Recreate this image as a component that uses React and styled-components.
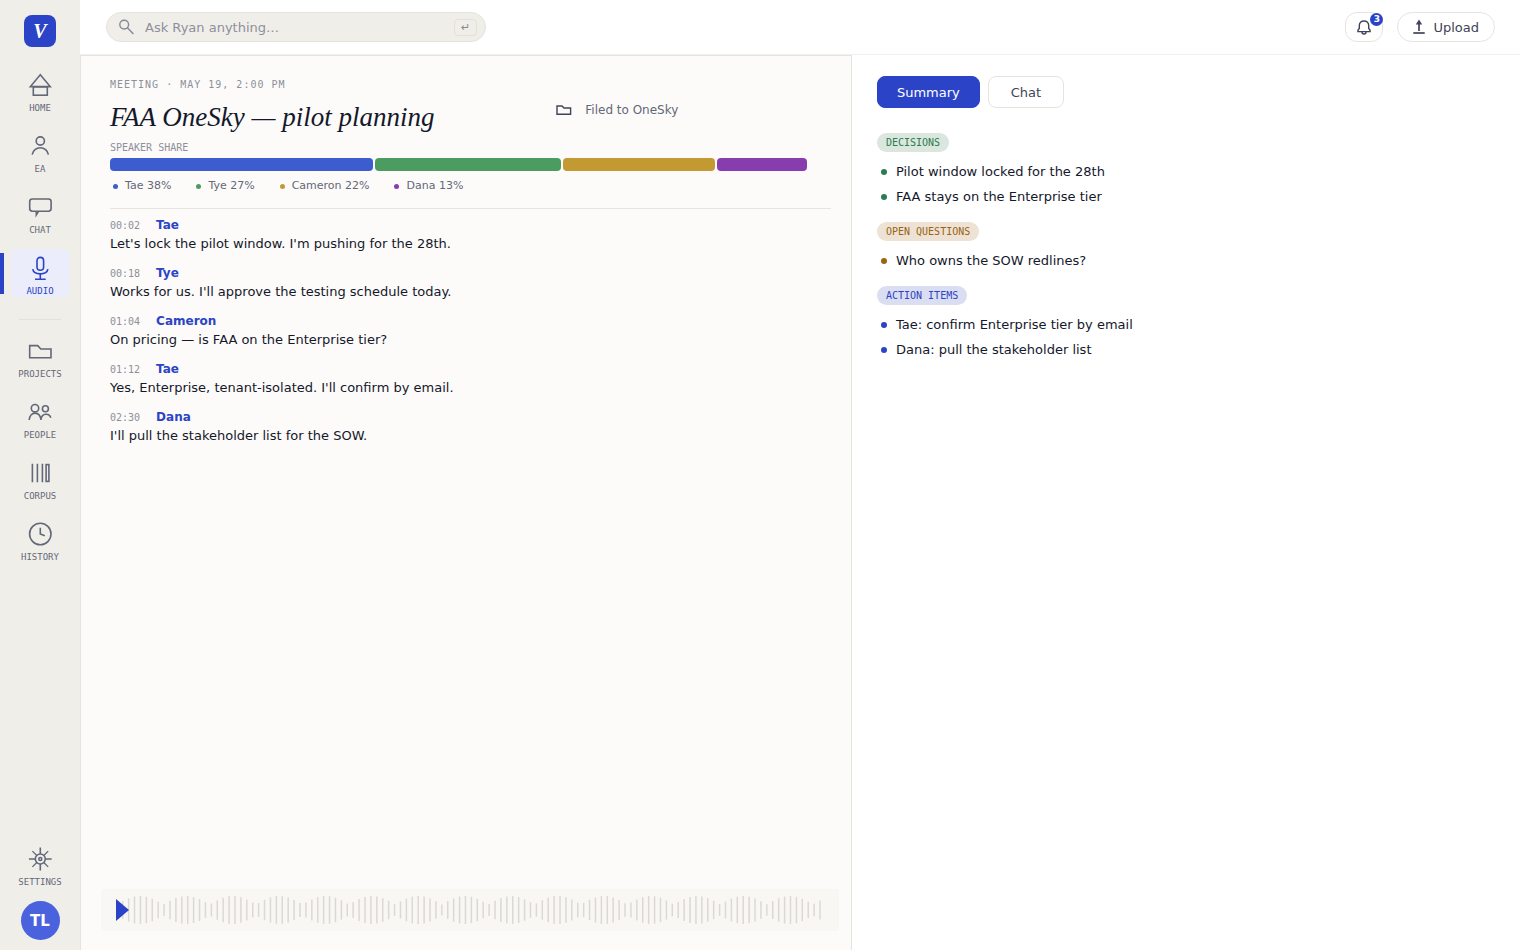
// App.jsx
import React, { useState } from 'react';
import styled, { createGlobalStyle } from 'styled-components';

const sans = "'DejaVu Sans', Verdana, sans-serif";
const mono = "'DejaVu Sans Mono', monospace";
const serif = "'Liberation Serif', 'Times New Roman', serif";

const GlobalStyle = createGlobalStyle`
  * {
    box-sizing: border-box;
  }

  body {
    margin: 0;
    background-color: #fff;
    color: #14182b;
    font-family: ${sans};
  }

  button, input {
    font-family: inherit;
  }
`;

// Shell
const Shell = styled.div`
  display: flex;
  min-height: 100vh;
`;

const Sidebar = styled.aside`
  display: flex;
  flex-direction: column;
  align-items: center;
  flex: 0 0 80px;
  padding: 15px 0 10px;
  background-color: #f0eee9;
`;

const Logo = styled.a`
  display: flex;
  align-items: center;
  justify-content: center;
  width: 32px;
  height: 32px;
  margin-bottom: 19px;
  border-radius: 8px;
  background-color: #2b44c7;
  color: #fff;
  font: italic bold 20px ${serif};
  text-decoration: none;
`;

const Nav = styled.nav`
  display: flex;
  flex-direction: column;
  align-items: center;
  gap: 12px;
  width: 100%;
`;

const NavItem = styled.a`
  position: relative;
  display: flex;
  flex-direction: column;
  align-items: center;
  gap: 6px;
  width: 60px;
  height: 49px;
  padding-top: 7px;
  border-radius: 8px;
  background-color: ${(props) => (props.$active ? '#ebedfb' : 'transparent')};
  color: ${(props) => (props.$active ? '#2b44c7' : '#636878')};
  font-family: ${mono};
  font-size: 9px;
  line-height: 10px;
  text-decoration: none;

  &::before {
    content: '';
    display: ${(props) => (props.$active ? 'block' : 'none')};
    position: absolute;
    left: -10px;
    top: 4px;
    bottom: 4px;
    width: 4px;
    background-color: #2b44c7;
  }
`;

const NavDivider = styled.hr`
  width: 42px;
  margin: 9px 0 0;
  border: none;
  border-top: 1px solid #e3e1da;
`;

const SidebarFoot = styled.div`
  display: flex;
  flex-direction: column;
  align-items: center;
  gap: 12px;
  margin-top: auto;
`;

const Avatar = styled.button`
  width: 39px;
  height: 39px;
  padding: 0;
  border: none;
  border-radius: 50%;
  background-color: #4a62dd;
  color: #fff;
  font-size: 15px;
  font-weight: bold;
`;

const Page = styled.div`
  display: flex;
  flex-direction: column;
  flex: 1;
  min-width: 0;
`;

// Top bar
const TopBar = styled.header`
  display: flex;
  align-items: center;
  gap: 14px;
  height: 55px;
  padding: 0 25px 0 26px;
  border-bottom: 1px solid #f1f0ed;
`;

const SearchBox = styled.label`
  display: flex;
  align-items: center;
  gap: 9px;
  width: 380px;
  height: 30px;
  margin-right: auto;
  padding: 0 8px 0 11px;
  border: 1px solid #e5e3da;
  border-radius: 15px;
  background-color: #f0eee9;
  color: #858996;
`;

const SearchInput = styled.input`
  flex: 1;
  min-width: 0;
  padding: 0;
  border: none;
  outline: none;
  background: transparent;
  color: #14182b;
  font-size: 13px;

  &::placeholder {
    color: #8d909b;
    opacity: 1;
  }
`;

const EnterKey = styled.kbd`
  display: flex;
  align-items: center;
  justify-content: center;
  width: 23px;
  height: 17px;
  border: 1px solid #e2e0d9;
  border-radius: 4px;
  color: #858996;
  font-family: ${sans};
  font-size: 11px;
`;

const OutlineButton = styled.button`
  position: relative;
  display: flex;
  align-items: center;
  justify-content: center;
  gap: 6px;
  height: 30px;
  padding: 0 ${(props) => (props.$round ? '15px' : '9px')};
  border: 1px solid #e6e4dc;
  border-radius: ${(props) => (props.$round ? '15px' : '12px')};
  background-color: #fff;
  color: #3f4458;
  font-size: 13px;
`;

const Badge = styled.span`
  position: absolute;
  top: 0;
  right: -1px;
  width: 13px;
  height: 13px;
  border-radius: 50%;
  background-color: #2b44c7;
  color: #fff;
  font-size: 9px;
  font-weight: bold;
  line-height: 13px;
  text-align: center;
`;

// Two panes below the bar
const Panes = styled.main`
  display: grid;
  grid-template-columns: 52fr 45fr;
  flex: 1;
`;

const MeetingPane = styled.section`
  display: flex;
  flex-direction: column;
  padding: 20px 12px 19px 20px;
  border: 1px solid #e6e4df;
  border-bottom: none;
  background-color: #fcfbf9;
`;

const MeetingBody = styled.div`
  padding: 0 8px 0 9px;
`;

const Kicker = styled.p`
  margin: 0;
  color: #8d909b;
  font-family: ${mono};
  font-size: 10px;
  letter-spacing: 1px;
  line-height: 18px;
`;

const TitleRow = styled.div`
  display: grid;
  grid-template-columns: 13fr 8fr;
`;

const Title = styled.h1`
  margin: 0;
  padding: 5px 0;
  font: italic normal 27px/36px ${serif};
`;

const Filed = styled.p`
  display: flex;
  align-items: center;
  gap: 13px;
  height: 16px;
  margin: 8px 0 0;
  color: #636878;
  font-size: 12px;

  svg {
    color: #3f4458;
  }
`;

const SmallLabel = styled.p`
  margin: 0;
  color: #8d909b;
  font-family: ${mono};
  font-size: 10px;
  line-height: 16px;
`;

const ShareBar = styled.div`
  display: flex;
  gap: 2px;
  height: 13px;
  margin: 2px 24px 0 0;
`;

const ShareSegment = styled.div`
  flex: ${(props) => props.$share} 1 0;
  border-radius: 4px;
  background-color: ${(props) => props.$color};
`;

const Legend = styled.ul`
  display: flex;
  gap: 25px;
  margin: 0;
  padding: 7px 0 14px 3px;
  border-bottom: 1px solid #e6e4df;
  list-style: none;
`;

const LegendItem = styled.li`
  display: flex;
  align-items: center;
  gap: 7px;
  color: #636878;
  font-size: 11px;
  line-height: 16px;
`;

const Dot = styled.span`
  flex: none;
  width: ${(props) => props.$size}px;
  height: ${(props) => props.$size}px;
  border-radius: 50%;
  background-color: ${(props) => props.$color};
`;

const Transcript = styled.ol`
  display: flex;
  flex-direction: column;
  gap: 10px;
  margin: 0;
  padding: 7px 0;
  list-style: none;
`;

const LineHead = styled.div`
  display: flex;
  align-items: center;
  gap: 16px;
  height: 18px;
`;

const Time = styled.time`
  color: #8d909b;
  font-family: ${mono};
  font-size: 10px;
`;

const Speaker = styled.strong`
  color: #2b44c7;
  font-size: 12px;
`;

const LineText = styled.p`
  margin: 0;
  font-size: 13px;
  line-height: 20px;
`;

const Player = styled.div`
  position: relative;
  display: flex;
  align-items: center;
  height: 42px;
  margin-top: auto;
  padding: 0 18px 0 15px;
  background-color: #f8f7f3;
`;

const Wave = styled.svg`
  width: 100%;
  height: 30px;
`;

const PlayButton = styled.button`
  position: absolute;
  left: 15px;
  top: 10px;
  display: flex;
  padding: 0;
  border: none;
  background: none;
  color: #2b44c7;
`;

// Summary pane
const SummaryPane = styled.section`
  padding: 21px 25px;
`;

const Tabs = styled.div`
  display: flex;
  gap: 8px;
  margin-bottom: 25px;
`;

const Tab = styled.button`
  height: 32px;
  padding: 0 ${(props) => (props.$active ? '19px' : '22px')};
  border: 1px solid ${(props) => (props.$active ? '#2b44c7' : '#e6e4dc')};
  border-radius: 8px;
  background-color: ${(props) => (props.$active ? '#2b44c7' : '#fff')};
  color: ${(props) => (props.$active ? '#fff' : '#3f4458')};
  font-size: 13px;
`;

const Group = styled.section`
  margin-bottom: 13px;
`;

const Pill = styled.h2`
  width: fit-content;
  margin: 0 0 7px;
  padding: 0 9px;
  border-radius: 10px;
  background-color: ${(props) => props.$bg};
  color: ${(props) => props.$color};
  font: normal 10px/19px ${mono};
`;

const Points = styled.ul`
  margin: 0;
  padding: 0 0 0 4px;
  list-style: none;
`;

const Point = styled.li`
  display: flex;
  align-items: center;
  gap: 9px;
  font-size: 13px;
  line-height: 25px;
`;

const NavIcon = ({ children }) => (
  <svg width="24" height="24" viewBox="0 0 24 24" fill="none" stroke="currentColor" strokeWidth="1.6" aria-hidden="true">
    {children}
  </svg>
);

const mainLinks = [
  {
    label: 'HOME',
    icon: (
      <>
        <path d="M12.3 1.8 L2.4 13.6 H22.2 Z" />
        <rect x="5.3" y="13.8" width="14" height="8.4" />
      </>
    ),
  },
  {
    label: 'EA',
    icon: (
      <>
        <circle cx="12.3" cy="7" r="4.1" />
        <path d="M4.2 20.6 A8.2 8.2 0 0 1 20.4 20.6" />
      </>
    ),
  },
  {
    label: 'CHAT',
    icon: (
      <>
        <rect x="1.7" y="4" width="21.4" height="12.2" rx="2.6" />
        <path d="M7.5 16.6 V22.8 L11.4 16.6 Z" fill="currentColor" stroke="none" />
      </>
    ),
  },
  {
    label: 'AUDIO',
    icon: (
      <>
        <rect x="9" y="1.4" width="6.6" height="12.8" rx="3.3" />
        <path d="M4.7 13.2 C5.8 19.4, 18.8 19.4, 19.9 13.2" />
        <path d="M12.3 18 V23.2 M7 23.2 H17.7" />
      </>
    ),
  },
];

const libraryLinks = [
  {
    label: 'PROJECTS',
    icon: <path d="M1.7 6.6 H9.7 L12.8 10 H23 V18.7 H1.7 Z" />,
  },
  {
    label: 'PEOPLE',
    icon: (
      <>
        <circle cx="7" cy="8.2" r="3.7" />
        <circle cx="17.4" cy="8.7" r="3" />
        <path d="M1.2 20 C2 10.8, 12 10.8, 13 20" />
        <path d="M13 19.2 C14 12.6, 21.4 13, 22.8 17.8" />
      </>
    ),
  },
  {
    label: 'CORPUS',
    icon: (
      <>
        <path d="M4.4 2.8 V21.2 M9.4 2.8 V21.2 M14.4 2.8 V21.2" />
        <rect x="18.1" y="3.6" width="2.8" height="16.8" />
      </>
    ),
  },
  {
    label: 'HISTORY',
    icon: (
      <>
        <circle cx="12.3" cy="12" r="10.7" />
        <path d="M12.3 5.8 V12 L16.8 13.8" />
      </>
    ),
  },
];

const speakers = [
  { name: 'Tae', share: 38, color: '#3c5dcf' },
  { name: 'Tye', share: 27, color: '#4c9c62' },
  { name: 'Cameron', share: 22, color: '#c39a32' },
  { name: 'Dana', share: 13, color: '#883dae' },
];

const lines = [
  { time: '00:02', name: 'Tae', text: "Let's lock the pilot window. I'm pushing for the 28th." },
  { time: '00:18', name: 'Tye', text: "Works for us. I'll approve the testing schedule today." },
  { time: '01:04', name: 'Cameron', text: 'On pricing — is FAA on the Enterprise tier?' },
  { time: '01:12', name: 'Tae', text: "Yes, Enterprise, tenant-isolated. I'll confirm by email." },
  { time: '02:30', name: 'Dana', text: "I'll pull the stakeholder list for the SOW." },
];

const groups = [
  {
    title: 'DECISIONS',
    color: '#2a7d4f',
    bg: '#dbe6de',
    points: ['Pilot window locked for the 28th', 'FAA stays on the Enterprise tier'],
  },
  {
    title: 'OPEN QUESTIONS',
    color: '#9a6412',
    bg: '#ede2d4',
    points: ['Who owns the SOW redlines?'],
  },
  {
    title: 'ACTION ITEMS',
    color: '#2b44c7',
    bg: '#dadef0',
    points: ['Tae: confirm Enterprise tier by email', 'Dana: pull the stakeholder list'],
  },
];

// Rectified sine, 120 strokes across the strip
const waveBars = Array.from({ length: 120 }, (_, i) => ({
  x: 0.8 + i * 5.91,
  h: 11 + 17 * Math.abs(Math.sin(i * 0.4)),
}));

const App = () => {
  const [page, setPage] = useState('AUDIO');
  const [tab, setTab] = useState('Summary');
  const [query, setQuery] = useState('');

  const renderLink = (link) => (
    <NavItem
      key={link.label}
      href={`#${link.label.toLowerCase()}`}
      $active={page === link.label}
      onClick={() => setPage(link.label)}
    >
      <NavIcon>{link.icon}</NavIcon>
      {link.label}
    </NavItem>
  );

  return (
    <Shell>
      <GlobalStyle />
      <Sidebar>
        <Logo href="#home">V</Logo>
        <Nav>
          {mainLinks.map(renderLink)}
          <NavDivider />
          {libraryLinks.map(renderLink)}
        </Nav>
        <SidebarFoot>
          {renderLink({
            label: 'SETTINGS',
            icon: (
              <>
                <circle cx="12.3" cy="12" r="5" />
                <circle cx="12.3" cy="12" r="1.5" />
                <path d="M12.3 7 V0.6 M12.3 17 V23.4 M7.3 12 H0.9 M17.3 12 H23.7" />
                <path d="M8.8 8.5 L4.4 4.1 M15.8 8.5 L20.2 4.1 M8.8 15.5 L4.4 19.9 M15.8 15.5 L20.2 19.9" strokeWidth="1.3" />
              </>
            ),
          })}
          <Avatar type="button">TL</Avatar>
        </SidebarFoot>
      </Sidebar>

      <Page>
        <TopBar>
          <SearchBox>
            <svg width="18" height="18" viewBox="0 0 18 18" fill="none" stroke="currentColor" strokeWidth="1.4" aria-hidden="true">
              <circle cx="6.2" cy="6.6" r="4.4" />
              <path d="M9.4 9.8 L15.4 15.9" />
            </svg>
            <SearchInput
              type="text"
              aria-label="Ask Ryan anything"
              placeholder="Ask Ryan anything…"
              value={query}
              onChange={(e) => setQuery(e.target.value)}
            />
            <EnterKey>↵</EnterKey>
          </SearchBox>
          <OutlineButton type="button" aria-label="Notifications">
            <svg width="18" height="18" viewBox="0 0 18 18" fill="none" stroke="currentColor" strokeWidth="1.4" aria-hidden="true">
              <path d="M2.2 13.6 H15.8 M3 13.6 V12 L4.3 10.4 V7.6 C4.3 1.4, 13.7 1.4, 13.7 7.6 V10.4 L15 12 V13.6" />
              <path d="M7 14 C7 16.6, 11 16.6, 11 14" />
            </svg>
            <Badge>3</Badge>
          </OutlineButton>
          <OutlineButton type="button" $round>
            <svg width="14" height="16" viewBox="0 0 14 16" fill="none" stroke="currentColor" strokeWidth="1.7" aria-hidden="true">
              <path d="M6 12 V3" />
              <path d="M2.8 5.4 L6 0.6 L9.2 5.4 Z" fill="currentColor" stroke="none" />
              <path d="M0.3 14 H11.7" />
            </svg>
            Upload
          </OutlineButton>
        </TopBar>

        <Panes>
          <MeetingPane>
            <MeetingBody>
              <Kicker>MEETING · MAY 19, 2:00 PM</Kicker>
              <TitleRow>
                <Title>FAA OneSky — pilot planning</Title>
                <Filed>
                  <svg width="16" height="12" viewBox="0 0 16 12" fill="none" stroke="currentColor" strokeWidth="1.4" aria-hidden="true">
                    <path d="M1 2 H6 L8 4 H14.6 V10.2 H1 Z" />
                  </svg>
                  Filed to OneSky
                </Filed>
              </TitleRow>
              <SmallLabel>SPEAKER SHARE</SmallLabel>
              <ShareBar>
                {speakers.map((s) => (
                  <ShareSegment key={s.name} $share={s.share} $color={s.color} />
                ))}
              </ShareBar>
              <Legend>
                {speakers.map((s) => (
                  <LegendItem key={s.name}>
                    <Dot $size={5} $color={s.color} />
                    {s.name} {s.share}%
                  </LegendItem>
                ))}
              </Legend>
              <Transcript>
                {lines.map((line) => (
                  <li key={line.time}>
                    <LineHead>
                      <Time>{line.time}</Time>
                      <Speaker>{line.name}</Speaker>
                    </LineHead>
                    <LineText>{line.text}</LineText>
                  </li>
                ))}
              </Transcript>
            </MeetingBody>
            <Player>
              <Wave viewBox="0 0 705 30" preserveAspectRatio="none" stroke="#dcd9d3" strokeWidth="1.5" aria-hidden="true">
                {waveBars.map((bar) => (
                  <line key={bar.x} x1={bar.x} x2={bar.x} y1={15 - bar.h / 2} y2={15 + bar.h / 2} />
                ))}
              </Wave>
              <PlayButton type="button" aria-label="Play">
                <svg width="14" height="22" viewBox="0 0 14 22" fill="currentColor">
                  <path d="M0 0 L13 11 L0 22 Z" />
                </svg>
              </PlayButton>
            </Player>
          </MeetingPane>

          <SummaryPane>
            <Tabs>
              {['Summary', 'Chat'].map((name) => (
                <Tab key={name} type="button" $active={tab === name} onClick={() => setTab(name)}>
                  {name}
                </Tab>
              ))}
            </Tabs>
            {groups.map((group) => (
              <Group key={group.title}>
                <Pill $bg={group.bg} $color={group.color}>{group.title}</Pill>
                <Points>
                  {group.points.map((point) => (
                    <Point key={point}>
                      <Dot $size={6} $color={group.color} />
                      {point}
                    </Point>
                  ))}
                </Points>
              </Group>
            ))}
          </SummaryPane>
        </Panes>
      </Page>
    </Shell>
  );
};

export default App;
